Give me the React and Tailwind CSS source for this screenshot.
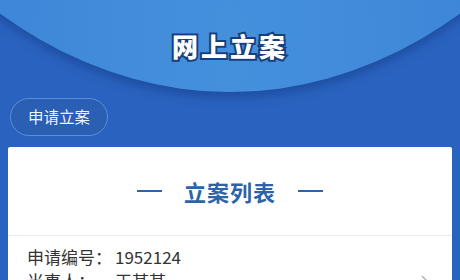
import React from 'react';

const App = () => {
  return (
    <div className="relative w-[460px] h-[280px] overflow-hidden bg-[#2a63bf] font-['Noto_Sans_CJK_SC','Noto_Sans',sans-serif]">
      {/* header arc */}
      <div className="absolute left-[-270px] top-[-1308px] w-[1000px] h-[1400px] rounded-[50%] bg-[radial-gradient(ellipse_at_50%_97%,#4590dd_0%,#3a81d5_55%)] shadow-[0_6px_10px_rgba(22,62,140,0.55)]" />

      <div className="relative">
        <div className="h-[92px] flex items-center justify-center">
          <h1 className="text-[26px] font-black text-white tracking-[3px] [paint-order:stroke_fill] [-webkit-text-stroke:4px_#183f7c] leading-none">
            网上立案
          </h1>
        </div>

        <div className="px-[10px] mt-[6px]">
          <button className="h-[38px] w-[98px] rounded-full border border-[#5b8fd4] bg-[#2a5fb3] text-white/95 text-[15.5px] flex items-center justify-center">
            申请立案
          </button>
        </div>

        <div className="relative mx-[8px] mt-[11px] bg-white rounded-t-[2px]">
          <div className="h-[88px] flex items-center justify-center gap-[22px] text-[#2d63a9]">
            <span className="w-[25px] h-[2px] bg-[#2d63a9]" />
            <span className="text-[22px] font-bold tracking-[1px]">立案列表</span>
            <span className="w-[25px] h-[2px] bg-[#2d63a9]" />
          </div>
          <div className="h-px bg-[#ececec]" />
          <div className="relative px-[19px] pt-[9px] text-[17px] text-[#333] leading-[24px]">
            <div className="flex">
              <span>申请编号：</span>
              <span className="ml-[3px]">1952124</span>
            </div>
            <div className="flex">
              <span>当事人：</span>
              <span className="ml-[20px]">王某某</span>
            </div>
            <svg className="absolute right-[20px] top-[38px]" width="12" height="20" viewBox="0 0 12 20" fill="none" stroke="#b5b5b5" strokeWidth="1.5">
              <path d="M2 2l8 8-8 8" />
            </svg>
          </div>
        </div>
      </div>
    </div>
  );
};

export default App;
